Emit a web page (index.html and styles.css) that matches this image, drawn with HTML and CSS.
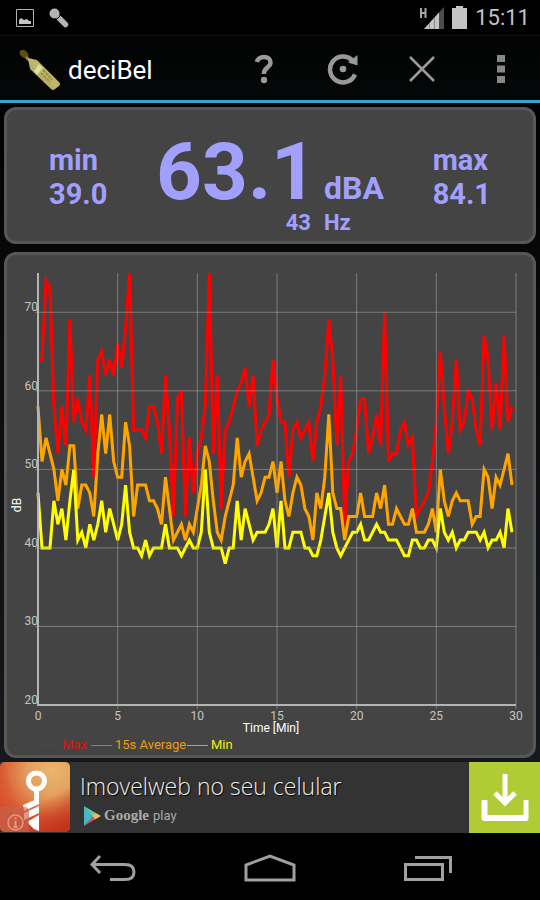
FILE: index.html
```html
<!DOCTYPE html>
<html lang="en">
<head>
<meta charset="utf-8">
<meta name="viewport" content="width=device-width, initial-scale=1">
<title>deciBel</title>
<link rel="stylesheet" href="styles.css">
</head>
<body>
<div class="status">
  <div class="status-group">
    <svg width="18" height="18" viewBox="0 0 18 18" aria-hidden="true"><path d="M.5.5h17v17H.5z" fill="none" stroke="#b4b4b4"/><path d="M3 15v-4l2-2 3 2 3-1 2 2h2v3z" fill="#c4c4c4"/></svg>
    <svg width="20" height="20" viewBox="0 0 20 20" aria-hidden="true"><circle cx="5.500" cy="5.500" r="5" fill="#b4b4b4"/><path d="M10.500 10.500l6 6" stroke="#b4b4b4" stroke-width="5.500" stroke-linecap="round"/><path d="M7 12l5-5" stroke="#000" stroke-width="1"/></svg>
  </div>
  <div class="status-group status-right">
    <svg width="24" height="22" viewBox="0 0 24 22" aria-hidden="true"><path d="M1 1v10M5.500 1v10M1 6h4.500" stroke="#a8a8a8" stroke-width="2" fill="none"/><path d="M4 22L24 0v22z" fill="#4c4c4c"/><path d="M4 22L19 5.500V22z" fill="#c4c4c4"/><path d="M9.500 16v6M14.500 11v11" stroke="#888"/></svg>
    <svg width="15" height="23" viewBox="0 0 15 23" aria-hidden="true"><path d="M4 0h7v2h4v21H0V2h4z" fill="#c4c4c4"/></svg>
    <span class="clock">15:11</span>
  </div>
</div>

<header class="bar">
  <h1 class="brand">
    <svg width="42" height="42" viewBox="0 0 42 42" aria-hidden="true">
      <defs><linearGradient id="bottle" x1="0" y1="1" x2="1" y2="0"><stop offset="0" stop-color="#8f873f"/><stop offset=".5" stop-color="#c2b86c"/><stop offset="1" stop-color="#a09545"/></linearGradient></defs>
      <ellipse cx="5" cy="5" rx="5" ry="3.500" transform="rotate(42 5 5)" fill="#5d4f0c"/>
      <path d="M7 8l4 4" stroke="#8f8546" stroke-width="3"/>
      <path d="M9 9l9 2 22 22q2 2 0 4l-4 3q-2 2-4 0L11 20z" fill="url(#bottle)"/>
      <path d="M20 15l-5 7 3 4 6-7z" fill="#dedba5"/>
      <path d="M24 21l9 10M22 24l9 9" stroke="#988e42" stroke-width="2" stroke-dasharray="3 1"/>
    </svg>
    <span>deciBel</span>
  </h1>
  <button class="action" aria-label="Help">
    <svg width="20" height="30" viewBox="0 0 20 30"><path d="M3 8C4 4 7 3 10 3c4 0 6.500 2 6.500 5.500 0 5-6.500 5-6.500 10.500v1" fill="none" stroke="#999" stroke-width="4.500"/><circle cx="10" cy="26" r="3.200" fill="#999"/></svg>
  </button>
  <button class="action" aria-label="Reset">
    <svg width="32" height="32" viewBox="0 0 32 32"><path d="M28 21.500A13 13 0 1 1 25 7" fill="none" stroke="#999" stroke-width="4.500"/><path d="M30.500 2v10.500l-9.500-3z" fill="#999"/><circle cx="16" cy="16" r="3.300" fill="#999"/></svg>
  </button>
  <button class="action" aria-label="Close">
    <svg width="26" height="26" viewBox="0 0 26 26"><path d="M1 1l24 24M25 1L1 25" stroke="#999" stroke-width="2.600"/></svg>
  </button>
  <button class="action" aria-label="More options">
    <svg width="8" height="28" viewBox="0 0 8 28"><path d="M0 0h8v7H0zM0 10.500h8v7H0zM0 21h8v7H0z" fill="#888"/></svg>
  </button>
</header>

<main class="content">
  <section class="panel readout" aria-label="Sound level">
    <div class="side"><span>min</span><span>39.0</span></div>
    <div class="current">
      <span class="level">63.1</span><span class="unit">dBA</span>
      <span class="freq">43</span><span class="freq-unit">Hz</span>
    </div>
    <div class="side"><span>max</span><span>84.1</span></div>
  </section>
  <section class="panel" aria-label="Level history">
    <svg class="chart" id="chart" viewBox="0 0 526 500" role="img" aria-label="Sound level over time"></svg>
  </section>
</main>

<a class="ad" href="#">
  <svg class="ad-icon" width="70" height="70" viewBox="0 0 70 70" aria-hidden="true">
    <defs>
      <radialGradient id="sun" cx=".75" cy=".12" r=".9"><stop offset="0" stop-color="#eab66c"/><stop offset=".4" stop-color="#e3a060"/><stop offset=".8" stop-color="#da5c32"/><stop offset="1" stop-color="#d44e2d"/></radialGradient>
      <linearGradient id="shade" x1=".4" y1=".3" x2=".8" y2="1"><stop offset=".4" stop-color="#c0301a" stop-opacity="0"/><stop offset="1" stop-color="#c0301a" stop-opacity=".9"/></linearGradient>
    </defs>
    <rect width="70" height="70" rx="5" fill="url(#sun)"/>
    <rect width="70" height="70" rx="5" fill="url(#shade)"/>
    <path d="M0 22Q14 40 34 50M8 3Q12 34 40 60" stroke="#ee8a55" fill="none" opacity=".25"/>
    <circle cx="36.500" cy="19" r="8" fill="none" stroke="#fff" stroke-width="5"/>
    <path d="M34 28h5v8l-5 2zM23 43l16-7v6l-15 7zM24 51l15-7v7l-15 7zM27 60l12-7v16l-5-2z" fill="#fff"/>
    <path d="M0 45h24q5 0 5 5v20H5q-5 0-5-5z" fill="#c6634b" opacity=".65"/>
    <circle cx="15.500" cy="60.500" r="7.500" fill="none" stroke="#df9a83" stroke-width="1.500"/>
    <path d="M15.500 59v6M15.500 55.500v2M13.500 65h4" stroke="#df9a83" stroke-width="2"/>
  </svg>
  <span class="ad-copy">
    <span class="ad-title">Imovelweb no seu celular</span>
    <span class="store">
      <svg width="18" height="20" viewBox="0 0 18 20" aria-hidden="true"><path d="M1 0l10 10L1 20z" fill="#45b8c4"/><path d="M1 0l11 6.500-2 4z" fill="#68c8a0"/><path d="M1 20l9-10 2 3.500z" fill="#d3546d"/><path d="M12 6.500l6 3.500-6 3.500-2.500-3.500z" fill="#e2bf58"/></svg>
      <span><span class="google">Google</span> <span class="play">play</span></span>
    </span>
  </span>
  <span class="download">
    <svg width="48" height="48" viewBox="0 0 48 48" aria-hidden="true"><path d="M3 27h-1.500v17q0 2 2 2h41q2 0 2-2V27h-3v15h-38V27z" fill="#fff" stroke="#fff" stroke-width="2" stroke-linejoin="round"/><path d="M24 0v28M14 19l10 10 10-10" fill="none" stroke="#fff" stroke-width="5"/></svg>
  </span>
</a>

<nav class="nav">
  <button aria-label="Back"><svg width="47" height="28" viewBox="0 0 47 28"><path d="M11 2L3 10.500 11 19M3 10.500h33q9 0 9 7.500t-9 7.500H21" fill="none" stroke="#a0a0a0" stroke-width="3"/></svg></button>
  <button aria-label="Home"><svg width="52" height="28" viewBox="0 0 52 28"><path d="M2 26V11L26 2l24 9v15z" fill="none" stroke="#a0a0a0" stroke-width="3"/></svg></button>
  <button aria-label="Recent apps"><svg width="48" height="26" viewBox="0 0 48 26"><path d="M1.500 9.500h37v15h-37zM11 2.500h35.500V18" fill="none" stroke="#a0a0a0" stroke-width="3"/></svg></button>
</nav>
<script src="chart.js"></script>
</body>
</html>
```
FILE: styles.css
```css
* {
  box-sizing: border-box;
}

body {
  margin: 0;
  min-height: 100vh;
  display: flex;
  flex-direction: column;
  background: #000;
  color: #fff;
  font-family: Roboto, "Liberation Sans", sans-serif;
}

svg {
  display: block;
}

button {
  display: flex;
  align-items: center;
  justify-content: center;
  padding: 0;
  border: 0;
  background: none;
}

.status {
  display: flex;
  align-items: center;
  justify-content: space-between;
  height: 36px;
  padding: 0 10px 0 16px;
  border-bottom: 1px solid #0d0d0d;
}

.status-group {
  display: flex;
  align-items: center;
  gap: 15px;
}

.status-right {
  gap: 8px;
}

.clock {
  color: #c4c4c4;
  font-size: 22px;
  line-height: 36px;
}

.bar {
  display: flex;
  height: 67px;
  border-bottom: 3px solid #33a5d6;
  background: linear-gradient(#020303, #050708);
}

.brand {
  display: flex;
  flex: 1;
  align-items: center;
  gap: 7px;
  margin: 0;
  padding: 4px 0 0 19px;
  font-size: 26px;
  font-weight: 400;
}

.action {
  width: 79px;
  padding-top: 2px;
}

.content {
  display: flex;
  flex-direction: column;
  gap: 8px;
  padding: 4px;
  background: linear-gradient(#020202, #15191d);
}

.panel {
  border: 3px solid #575757;
  border-radius: 12px;
  background: #444;
}

.readout {
  display: flex;
  justify-content: space-between;
  height: 137px;
  padding: 0 42px;
  color: #a2a0ff;
  font-weight: 700;
}

.side {
  display: flex;
  flex-direction: column;
  padding-top: 33px;
  font-size: 29px;
  line-height: 34px;
}

.current {
  display: grid;
  grid-template-columns: auto auto;
  grid-template-rows: 84px 24px;
  align-content: start;
  align-items: baseline;
  column-gap: 7px;
  padding-top: 17px;
}

.level {
  font-size: 80px;
  line-height: 90px;
}

.unit {
  font-size: 32px;
  line-height: 34px;
}

.freq,
.freq-unit {
  font-size: 22px;
  line-height: 24px;
}

.freq {
  padding-right: 6px;
  text-align: right;
}

.chart {
  width: 100%;
  height: auto;
}

.grid {
  fill: none;
  stroke: #a0a0a0;
  stroke-opacity: 0.6;
}

.axis {
  fill: none;
  stroke: #b4b4b4;
  stroke-width: 2;
}

.series {
  fill: none;
  stroke-width: 3;
}

.tick {
  fill: #c4c4c4;
  font-size: 12px;
}

.axis-title {
  fill: #fff;
  font-size: 12px;
}

.legend {
  font-size: 13px;
}

.middle {
  text-anchor: middle;
}

.end {
  text-anchor: end;
}

.ad {
  display: flex;
  height: 71px;
  background: #333;
  color: #eee;
  text-decoration: none;
}

.ad-copy {
  display: flex;
  flex: 1;
  flex-direction: column;
  padding: 7px 0 0 10px;
}

.ad-title {
  font-family: "Open Sans", sans-serif;
  font-size: 23px;
  font-weight: 300;
  line-height: 34px;
  text-shadow: 1px 1px 1px #000;
}

.store {
  display: flex;
  align-items: center;
  gap: 3px;
  padding-left: 3px;
  color: #aaa;
  line-height: 24px;
}

.google {
  font-family: "Liberation Serif", serif;
  font-size: 15px;
  font-weight: 700;
}

.play {
  font-size: 13px;
}

.download {
  display: flex;
  align-items: center;
  justify-content: center;
  width: 71px;
  background: #b1cb35;
}

.nav {
  display: flex;
  flex: 1;
  justify-content: center;
  min-height: 67px;
}

.nav button {
  width: 158px;
  padding-top: 3px;
}
```
FILE: chart.js
```js
const series = [
  { name: "Max", color: "#ff0000", legend: "#e01010", values: [
    64,64,74,73,58,52,58,53,69,56,59,56,55,62,49,64,65,62,64,62,
    66,63,68,75,55,55,55,54,58,58,56,52,62,55,44,59,60,44,54,47,
    52,54,58,75,52,62,45,55,56,58,60,61,63,58,62,53,55,56,57,64,
    59,56,56,49,55,56,54,55,56,51,56,58,62,69,64,53,62,43,51,52,
    55,59,59,52,54,57,53,70,51,52,52,55,56,53,54,44,45,46,47,51,
    56,65,58,52,56,64,55,56,60,59,55,53,67,64,55,61,55,67,56,58] },
  { name: "15s Average", color: "#ffa500", legend: "#f09c08", values: [
    58,51,54,52,50,46,50,48,53,53,45,48,48,47,44,52,57,52,57,51,
    49,49,56,53,44,48,48,48,46,46,45,43,49,45,41,42,43,41,43,42,
    45,48,53,51,46,42,41,44,46,48,54,49,51,52,49,46,47,49,49,51,
    47,51,46,44,47,49,48,45,44,41,47,45,49,57,47,45,45,41,44,44,
    44,47,44,44,44,47,45,48,43,43,45,44,43,43,45,42,42,42,43,45,
    42,50,46,44,46,47,46,46,46,43,44,44,50,49,45,49,48,50,52,48] },
  { name: "Min", color: "#ffff00", legend: "#f0f008", values: [
    47,40,40,40,46,43,45,41,46,50,41,42,40,43,41,43,46,42,45,43,
    41,43,48,42,40,40,39,41,39,40,40,40,43,40,40,40,39,40,41,40,
    40,42,50,42,40,40,40,38,40,40,46,41,45,43,41,42,42,42,43,45,
    40,46,40,40,42,42,42,40,40,39,39,41,44,47,42,40,39,40,41,42,
    42,43,41,41,42,43,42,42,41,41,41,40,39,39,41,41,40,40,41,41,
    40,45,42,41,42,40,41,41,42,42,42,41,42,40,41,41,42,40,45,42] }
];

const plot = { left: 31, right: 509, top: 18, bottom: 450 };
const xAt = minutes => plot.left + (plot.right - plot.left) * minutes / 30;
const yAt = level => plot.bottom - (plot.bottom - plot.top) * (level - 20) / 55;
const chart = document.getElementById("chart");

function add(tag, attributes, text) {
  const node = document.createElementNS("http://www.w3.org/2000/svg", tag);
  for (const key in attributes) node.setAttribute(key, attributes[key]);
  if (text) node.textContent = text;
  chart.appendChild(node);
}

for (const line of series) {
  const points = line.values.map((v, i) => xAt(i / 4).toFixed(1) + "," + yAt(v).toFixed(1));
  add("polyline", { class: "series", stroke: line.color, points: points.join(" ") });
}

// Grid lines sit above the series.
for (let level = 30; level <= 70; level += 10) {
  add("path", { class: "grid", d: `M${plot.left - 3} ${yAt(level)}H${plot.right}` });
}
for (let minute = 5; minute <= 30; minute += 5) {
  add("path", { class: "grid", d: `M${xAt(minute)} ${plot.top}V${plot.bottom + 4}` });
}
add("path", { class: "axis", d: `M${plot.left} ${plot.top}V${plot.bottom}H${plot.right}` });

for (let level = 20; level <= 70; level += 10) {
  add("text", { class: "tick end", x: plot.left, y: yAt(level) - 1 }, String(level));
}
for (let minute = 0; minute <= 30; minute += 5) {
  add("text", { class: "tick middle", x: xAt(minute), y: plot.bottom + 15 }, String(minute));
}
add("text", { class: "axis-title middle", x: 264, y: 477 }, "Time [Min]");
add("text", { class: "axis-title middle", transform: "translate(14 250) rotate(-90)" }, "dB");

const legendStarts = [31, 84, 180];
series.forEach((line, i) => {
  const x = legendStarts[i];
  add("path", { d: `M${x} 490.500h21`, stroke: line.color, "stroke-opacity": 0.6 });
  add("text", { class: "legend", x: x + 24, y: 494, fill: line.legend }, line.name);
});
```
